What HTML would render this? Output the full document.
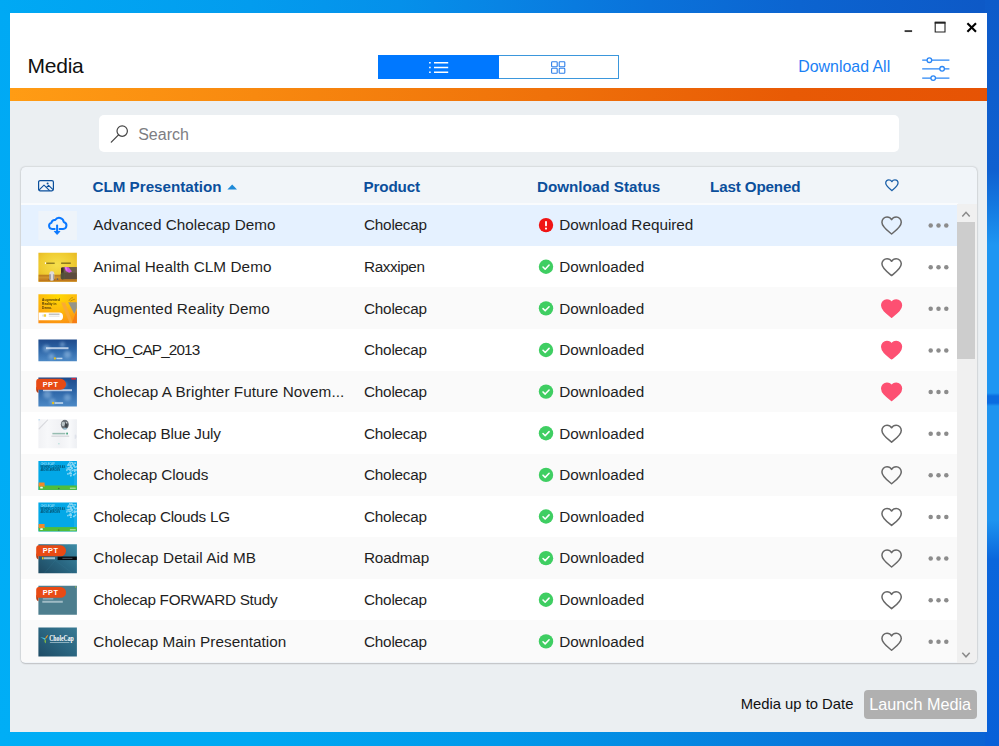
<!DOCTYPE html>
<html lang="en">
<head>
<meta charset="utf-8">
<title>Media</title>
<style>
html,body{margin:0;padding:0;}
body{width:999px;height:746px;overflow:hidden;position:relative;font-family:"Liberation Sans",sans-serif;color:#1b1b1b;
background:linear-gradient(180deg,#00a9f4,#00aef6);}
.abs{position:absolute;}
#tstrip{position:absolute;left:0;top:0;width:999px;height:14px;background:linear-gradient(90deg,#00a9f4 0%,#039cee 25%,#0590ea 40%,#0884e4 50%,#0a72da 65%,#0c64d0 80%,#0d58c6 100%);}
#bstrip{position:absolute;left:0;top:730px;width:999px;height:16px;background:linear-gradient(90deg,#00aef6 0%,#00a8f2 25%,#0198ea 50%,#048ae2 65%,#0878dc 80%,#0a62d4 100%);}
#rstrip{position:absolute;left:985px;top:0;width:14px;height:746px;background:linear-gradient(180deg,#0d5bc9 0px,#0f60d0 170px,#1478e0 205px,#1e96f2 245px,#1e96f2 393px,#0a6ce0 396px,#0a6ce0 403px,#1e94f0 406px,#1e94f0 520px,#0a66dc 560px,#0860d8 746px);}
#win{position:absolute;left:10px;top:13px;width:977px;height:719px;background:#ebeff2;overflow:hidden;}
#top{position:absolute;left:0;top:0;width:977px;height:76px;background:#fff;}
#bar{position:absolute;left:0;top:75px;width:977px;height:13px;background:linear-gradient(90deg,#ff9c14 0%,#f8890f 25%,#ef710a 55%,#e85a05 80%,#e65304 100%);}
#title{position:absolute;left:17.4px;top:39.8px;letter-spacing:-.2px;font-size:21px;line-height:26px;color:#111;}
#tog{position:absolute;left:368px;top:42px;width:241px;height:24px;box-sizing:border-box;border:1px solid #3b97dc;background:#fff;}
#tog .on{position:absolute;left:-1px;top:-1px;width:121px;height:24px;background:#0078ff;}
#tog svg{position:absolute;left:-1px;top:-1px;}
#dl{position:absolute;left:788.3px;top:44px;font-size:15.9px;line-height:20px;color:#1a80f5;}
#search{position:absolute;left:89px;top:102px;width:800px;height:37px;background:#fff;border-radius:5px;}
#search span{position:absolute;left:39.2px;top:9.8px;font-size:16px;line-height:20px;color:#7d7d82;}
#search svg{position:absolute;left:0;top:0;}
#card{position:absolute;left:11px;top:154px;width:955.6px;height:496px;background:#f1f5f9;border-radius:4.5px;overflow:hidden;box-shadow:0 0 2px rgba(0,0,0,.28),0 1px 1.5px rgba(0,0,0,.12);}
.hd{position:absolute;top:9.7px;font-size:15.2px;line-height:20px;font-weight:bold;color:#0b4f9c;white-space:nowrap;}
.row{position:absolute;left:0;width:936.4px;height:41.63px;}
.row.a{background:#fff;}
.row.b{background:#fafafa;}
.row.sel{background:#e5f1ff;}
.row span{position:absolute;top:11.2px;font-size:15.3px;line-height:20px;white-space:nowrap;color:#1f1f1f;}
.row .n{left:72.3px;}
.row .p{left:343px;}
.row .s{left:538.2px;}
.rg{position:absolute;left:0;top:0;overflow:visible;}
#sb{position:absolute;left:936.4px;top:37px;width:19.3px;height:459px;background:#f0f0f0;}
#sb .thumb{position:absolute;left:0;top:18px;width:17.4px;height:137px;background:#cdcdcd;}
#sb svg{position:absolute;left:0;}
#foot{position:absolute;left:730.7px;top:680.5px;font-size:14.8px;line-height:20px;color:#111;}
#btn{position:absolute;left:853.7px;top:676.6px;width:113px;height:29.2px;border-radius:4px;background:#b0b0b0;color:#fff;font-size:16.2px;line-height:29px;text-align:center;white-space:nowrap;}
#wc{position:absolute;left:880px;top:0;}
</style>
</head>
<body>
<div id="tstrip"></div><div id="bstrip"></div><div id="rstrip"></div>
<div id="win">
  <div id="top"></div>
  <div id="bar"></div>
  <div id="title">Media</div>
  <svg id="wc" width="97" height="76" viewBox="0 0 97 76">
    <path d="M14.600 18.100h7.500" stroke="#3a3a3a" stroke-width="1.900" fill="none"/>
    <path d="M45.2 9.8h9.8v9.2h-9.8z" stroke="#222" stroke-width="1.1" fill="none"/><path d="M44.7 9.6h10.8" stroke="#222" stroke-width="2" fill="none"/>
    <path d="M77.4 10.2l8.6 8.6M86 10.2l-8.6 8.6" stroke="#000" stroke-width="2.1" fill="none"/>
    <g stroke="#2a86f5" stroke-width="1.3" fill="#fff">
      <path d="M32.2 47.2h27.2M32.2 55.8h27.2M32.2 65.1h27.2"/>
      <circle cx="39.4" cy="47.2" r="2.3"/><circle cx="52.1" cy="55.8" r="2.3"/><circle cx="43.2" cy="65.1" r="2.3"/>
    </g>
  </svg>
  <div id="tog"><div class="on"></div>
    <svg width="241" height="24" viewBox="0 0 241 24">
      <g stroke="#fff" stroke-width="1.5" fill="none"><path d="M56 7.7h14.2M56 12.5h14.2M56 17.3h14.2"/><path d="M51.1 7.7h1.6M51.1 12.5h1.6M51.1 17.3h1.6"/></g>
      <g stroke="#2f80ea" stroke-width="1.1" fill="none"><rect x="173.6" y="6.7" width="5.6" height="5" rx=".8"/><rect x="181.2" y="6.7" width="5.6" height="5" rx=".8"/><rect x="173.6" y="13.3" width="5.6" height="5" rx=".8"/><rect x="181.2" y="13.3" width="5.6" height="5" rx=".8"/></g>
    </svg>
  </div>
  <div id="dl">Download All</div>
  <div id="search"><svg width="40" height="37" viewBox="0 0 40 37"><circle cx="23.2" cy="16.1" r="5.2" fill="none" stroke="#444" stroke-width="1.2"/><path d="M19.5 19.9l-7.2 7.2" stroke="#444" stroke-width="1.3" stroke-linecap="round"/></svg><span>Search</span></div>
  <div id="card">
    <svg class="abs" style="left:16px;top:12px" width="18" height="14" viewBox="0 0 18 14"><rect x="1.6" y="1.6" width="14.8" height="10.2" rx="1.5" fill="none" stroke="#0b4f9c" stroke-width="1.2"/><path d="M2.2 10.8l4.8-4.6 5.6 5.4M9.2 8.6l2.4-2.2 4.4 4.2" fill="none" stroke="#0b4f9c" stroke-width="1.1" stroke-linejoin="round"/><circle cx="10.6" cy="4.4" r="1" fill="#0b4f9c"/></svg>
    <div class="hd" style="left:71.5px">CLM Presentation</div>
    <svg class="abs" style="left:205px;top:15px" width="13" height="10" viewBox="0 0 13 10"><path d="M1.400 7.600L6.200 2.600l4.800 5z" fill="#1e8ad8"/></svg>
    <div class="hd" style="left:342.5px;letter-spacing:-.13px">Product</div>
    <div class="hd" style="left:516px">Download Status</div>
    <div class="hd" style="left:689px;letter-spacing:-.14px">Last Opened</div>
    <svg class="abs" style="left:862px;top:10px" width="18" height="16" viewBox="0 0 18 16"><g transform="translate(.6 .8) scale(.92)"><path d="M9 14C5.500 11.100 2.300 8.700 2.300 5.700 2.300 3.700 3.800 2.200 5.700 2.200c1.300 0 2.600.7 3.300 1.900.7-1.200 2-1.900 3.300-1.900 1.900 0 3.400 1.500 3.400 3.500 0 3-3.200 5.400-6.700 8.300z" fill="none" stroke="#1a5fa8" stroke-width="1.400" stroke-linejoin="round"/></g></svg>
<div class="abs" style="left:0;top:36px;width:937px;height:2px;background:#f9fbfd"></div>
<div class="row sel" style="top:38px;height:41px"><svg class="rg" width="936" height="43" viewBox="0 0 936 43"><g transform="translate(17.40 6.10)"><svg x="0" y="0" width="38.5" height="29" viewBox="0 0 38.5 29"><rect x="-1" y="-1" width="40.500" height="31" fill="#eef4fa"/><path d="M16.300 17.900H13.700a3.100 3.100 0 0 1-.7-6.100 3.500 3.500 0 0 1 3.800-2.800 4.600 4.600 0 0 1 8.500 1.900 3.550 3.550 0 0 1-.6 7H21.100" fill="none" stroke="#0a78ff" stroke-width="2" stroke-linecap="round" stroke-linejoin="round"/><path d="M18.700 14.300v6.500" stroke="#0a78ff" stroke-width="2" stroke-linecap="round"/><path d="M15.900 20.300h5.600l-2.800 3z" fill="#0a78ff" stroke="#0a78ff" stroke-width="1" stroke-linejoin="round"/></svg></g><g transform="translate(517.80 12.90) scale(1.0286)"><circle cx="7" cy="7" r="7" fill="#f01414"/><rect x="6.100" y="2.900" width="1.800" height="5.300" rx=".9" fill="#fff"/><circle cx="7" cy="10.400" r="1.050" fill="#fff"/></g><g transform="translate(859.60 10.60)"><path d="M11 18.300C6.400 14.500 1.700 11.200 1.700 6.800 1.700 3.900 3.900 1.700 6.600 1.700c1.800 0 3.500 1 4.400 2.600.9-1.600 2.600-2.600 4.400-2.600 2.700 0 4.900 2.200 4.900 5.100 0 4.400-4.700 7.700-9.300 11.500z" fill="none" stroke="#686868" stroke-width="1.450" stroke-linejoin="round" transform="translate(11 10) scale(1.04 1.02) translate(-11 -10.100)"/></g><g transform="translate(906.60 17.50)"><g fill="#8c8c8c"><circle cx="3.100" cy="3" r="2.250"/><circle cx="10.900" cy="3" r="2.250"/><circle cx="18.700" cy="3" r="2.250"/></g></g></svg><span class="n" style="top:10.40px;letter-spacing:0.009px;">Advanced Cholecap Demo</span><span class="p" style="top:10.40px;letter-spacing:-0.221px;">Cholecap</span><span class="s" style="top:10.40px;letter-spacing:-0.012px;">Download Required</span></div>
<div class="row a" style="top:79px;height:41px"><svg class="rg" width="936" height="43" viewBox="0 0 936 43"><g transform="translate(17.40 6.73)"><svg x="0" y="0" width="38.5" height="29" viewBox="0 0 38.5 29"><defs><radialGradient id="w1" cx=".48" cy=".42" r=".75"><stop offset="0" stop-color="#f6df4c"/><stop offset=".55" stop-color="#efcb30"/><stop offset="1" stop-color="#e2ad1b"/></radialGradient><linearGradient id="w1f" x1="0" y1="0" x2="0" y2="1"><stop offset="0" stop-color="#b9781a"/><stop offset=".4" stop-color="#d0932a"/><stop offset="1" stop-color="#b86c16"/></linearGradient><filter id="w1b"><feGaussianBlur stdDeviation=".45"/></filter><filter id="w1c"><feGaussianBlur stdDeviation=".25"/></filter></defs><rect x="-1" y="-1" width="40.500" height="31" fill="url(#w1)"/><rect y="22" width="38.500" height="7" fill="url(#w1f)"/><g filter="url(#w1b)"><rect x="22.700" y="14.500" width="16.500" height="12" rx="1.200" fill="#5c4c3e"/><rect x="24.500" y="14.500" width="14.500" height="5.500" fill="#6e5e4c"/><rect x="22.600" y="15" width="2.600" height="11.500" rx="1" fill="#3f3026"/><path d="M26 13.900l4.300.5 3.300 4.300-2.800 1.300-3.500-1.800z" fill="#cf52dc"/><path d="M26.300 14.200l2 .3.800 3.500-1.500-.6z" fill="#e27af0"/><rect x="22.200" y="19.800" width="4.800" height="6.800" rx="1.600" fill="#55553c" opacity=".85"/><ellipse cx="13.400" cy="26.800" rx="3.600" ry="1" fill="#8a5a14" opacity=".6"/><rect x="11" y="18.600" width="4.800" height="9.300" rx="2" fill="#dedada"/><rect x="11" y="21.500" width="1.300" height="5.500" fill="#8c8c92"/><rect x="14.600" y="21.500" width="1.200" height="5.500" fill="#a4a4aa"/><circle cx="19.100" cy="26.400" r=".8" fill="#5a6068"/></g><g filter="url(#w1c)"><rect x="6.500" y="9.600" width="1.200" height="1.700" fill="#fff"/><rect x="7.900" y="9.900" width="8.400" height="1.200" fill="#3a2c0c" opacity=".6"/><rect x="22.700" y="9.800" width="9.700" height="1.300" fill="#3a2c0c" opacity=".65"/></g></svg></g><g transform="translate(517.80 13.53) scale(1.0286)"><circle cx="7" cy="7" r="7" fill="#3fce62"/><path d="M4.100 7.300l2.100 2.100L10 5.400" fill="none" stroke="#fff" stroke-width="1.500" stroke-linecap="round" stroke-linejoin="round"/></g><g transform="translate(859.60 11.23)"><path d="M11 18.300C6.400 14.500 1.700 11.200 1.700 6.800 1.700 3.900 3.900 1.700 6.600 1.700c1.800 0 3.500 1 4.400 2.600.9-1.600 2.600-2.600 4.400-2.600 2.700 0 4.900 2.200 4.900 5.100 0 4.400-4.700 7.700-9.300 11.500z" fill="none" stroke="#686868" stroke-width="1.450" stroke-linejoin="round" transform="translate(11 10) scale(1.04 1.02) translate(-11 -10.100)"/></g><g transform="translate(906.60 18.13)"><g fill="#8c8c8c"><circle cx="3.100" cy="3" r="2.250"/><circle cx="10.900" cy="3" r="2.250"/><circle cx="18.700" cy="3" r="2.250"/></g></g></svg><span class="n" style="top:11.03px;letter-spacing:0.063px;">Animal Health CLM Demo</span><span class="p" style="top:11.03px;letter-spacing:-0.398px;">Raxxipen</span><span class="s" style="top:11.03px;">Downloaded</span></div>
<div class="row b" style="top:120px;height:42px"><svg class="rg" width="936" height="44" viewBox="0 0 936 44"><g transform="translate(17.40 7.36)"><svg x="0" y="0" width="38.5" height="29" viewBox="0 0 38.5 29"><defs><radialGradient id="w2" cx=".5" cy=".08" r=".95"><stop offset="0" stop-color="#ffd902"/><stop offset=".45" stop-color="#fdbd0c"/><stop offset="1" stop-color="#fb8f12"/></radialGradient><filter id="w2b"><feGaussianBlur stdDeviation=".3"/></filter></defs><rect x="-1" y="-1" width="40.500" height="31" fill="url(#w2)"/><g filter="url(#w2b)"><path d="M22.700 8.200h4.100l7.600 20.800h-3.100z" fill="#f9a836" opacity=".9"/><path d="M38.500 15.500l-5 13.500h5z" fill="#f47a14" opacity=".9"/><path d="M29.800 7.900h8.700v5.700l-2.600 6z" fill="#94948a"/><path d="M0 18.100h20.700a3.950 3.950 0 0 1 0 7.900H0z" fill="#fff"/><rect x="5.400" y="19.900" width="2.300" height="2.500" fill="#f0cf3a"/><rect x="4" y="20.200" width="1.400" height="2" fill="#d8d8d8"/><rect x="10.400" y="19.200" width="10.700" height="1.300" fill="#9a9a9a" opacity=".7"/><rect x="10.400" y="21.300" width="10.700" height="1" fill="#c8c8c8" opacity=".6"/></g><g font-family="Liberation Sans,sans-serif" font-weight="bold" font-size="4.100" fill="#3a2806" opacity=".9"><text x="3.700" y="7" textLength="17.800" lengthAdjust="spacingAndGlyphs">Augmented</text><text x="3.700" y="10.800" textLength="14.300" lengthAdjust="spacingAndGlyphs">Reality in</text><text x="3.700" y="14.500" textLength="9.700" lengthAdjust="spacingAndGlyphs">Demo.</text></g><path d="M30.500 6.500c1-1.500 1.500-2.500 3-3M32 6.800c1.500-1 3-1.500 4.500-2M33.500 3.200l1 .3" stroke="#4a3a10" stroke-width=".45" fill="none" opacity=".8"/></svg></g><g transform="translate(517.80 14.16) scale(1.0286)"><circle cx="7" cy="7" r="7" fill="#3fce62"/><path d="M4.100 7.300l2.100 2.100L10 5.400" fill="none" stroke="#fff" stroke-width="1.500" stroke-linecap="round" stroke-linejoin="round"/></g><g transform="translate(859.60 11.86)"><path d="M11 18.300C6.400 14.500 1.700 11.200 1.700 6.800 1.700 3.900 3.900 1.700 6.600 1.700c1.800 0 3.500 1 4.400 2.600.9-1.600 2.600-2.600 4.400-2.600 2.700 0 4.900 2.200 4.900 5.100 0 4.400-4.700 7.700-9.300 11.500z" fill="#fd5072" stroke="#fd5072" stroke-width="1.400" stroke-linejoin="round" transform="translate(11 10) scale(1.06 1.04) translate(-11 -10.300)"/></g><g transform="translate(906.60 18.76)"><g fill="#8c8c8c"><circle cx="3.100" cy="3" r="2.250"/><circle cx="10.900" cy="3" r="2.250"/><circle cx="18.700" cy="3" r="2.250"/></g></g></svg><span class="n" style="top:11.66px;letter-spacing:0.108px;">Augmented Reality Demo</span><span class="p" style="top:11.66px;letter-spacing:-0.221px;">Cholecap</span><span class="s" style="top:11.66px;">Downloaded</span></div>
<div class="row a" style="top:162px;height:42px"><svg class="rg" width="936" height="44" viewBox="0 0 936 44"><g transform="translate(17.40 6.99)"><svg x="0" y="3.4" width="38.5" height="21.8" viewBox="0 0 38.5 21.8"><defs><linearGradient id="w3" x1="0" y1="0" x2="0" y2="1"><stop offset="0" stop-color="#1e4888"/><stop offset=".45" stop-color="#2c64a6"/><stop offset="1" stop-color="#4f8cc8"/></linearGradient><filter id="w3b" x="-50%" y="-50%" width="200%" height="200%"><feGaussianBlur stdDeviation="1.600"/></filter></defs><rect x="-1" y="-1" width="40.500" height="23.800" fill="url(#w3)"/><g filter="url(#w3b)" fill="#9cc3e8" opacity=".55"><circle cx="8" cy="9" r="3.500"/><circle cx="13" cy="17" r="3"/><circle cx="29" cy="15" r="3.500"/><circle cx="24" cy="5" r="2.500"/></g><rect x="7.600" y="7.800" width="22.500" height="2" fill="#e4eefa" opacity=".75"/><rect x="15.500" y="18" width="2" height="2" fill="#e8c21a"/><rect x="18" y="18.300" width="6" height="1.500" fill="#d6e6f6" opacity=".85"/></svg></g><g transform="translate(517.80 13.79) scale(1.0286)"><circle cx="7" cy="7" r="7" fill="#3fce62"/><path d="M4.100 7.300l2.100 2.100L10 5.400" fill="none" stroke="#fff" stroke-width="1.500" stroke-linecap="round" stroke-linejoin="round"/></g><g transform="translate(859.60 11.49)"><path d="M11 18.300C6.400 14.500 1.700 11.200 1.700 6.800 1.700 3.900 3.900 1.700 6.600 1.700c1.800 0 3.500 1 4.400 2.600.9-1.600 2.600-2.600 4.400-2.600 2.700 0 4.900 2.200 4.900 5.100 0 4.400-4.700 7.700-9.300 11.500z" fill="#fd5072" stroke="#fd5072" stroke-width="1.400" stroke-linejoin="round" transform="translate(11 10) scale(1.06 1.04) translate(-11 -10.300)"/></g><g transform="translate(906.60 18.39)"><g fill="#8c8c8c"><circle cx="3.100" cy="3" r="2.250"/><circle cx="10.900" cy="3" r="2.250"/><circle cx="18.700" cy="3" r="2.250"/></g></g></svg><span class="n" style="top:11.29px;letter-spacing:-0.874px;">CHO_CAP_2013</span><span class="p" style="top:11.29px;letter-spacing:-0.221px;">Cholecap</span><span class="s" style="top:11.29px;">Downloaded</span></div>
<div class="row b" style="top:204px;height:41px"><svg class="rg" width="936" height="43" viewBox="0 0 936 43"><g transform="translate(17.40 6.62)"><svg x="0" y="0" width="38.5" height="29" viewBox="0 0 38.5 29"><defs><linearGradient id="w4" x1="0" y1="0" x2="0" y2="1"><stop offset="0" stop-color="#1e4888"/><stop offset=".45" stop-color="#2c64a6"/><stop offset="1" stop-color="#4f8cc8"/></linearGradient><filter id="w4b" x="-50%" y="-50%" width="200%" height="200%"><feGaussianBlur stdDeviation="1.600"/></filter></defs><rect x="-1" y="-1" width="40.500" height="31" fill="url(#w4)"/><g filter="url(#w4b)" fill="#9cc3e8" opacity=".5"><circle cx="9" cy="17" r="4"/><circle cx="14" cy="24" r="3"/><circle cx="29" cy="20" r="3.500"/><circle cx="26" cy="7" r="2.500"/></g><rect x="4.600" y="11.600" width="29" height="2" fill="#e4eefa" opacity=".75"/><rect x="13.700" y="24.300" width="2" height="2.200" fill="#e8c21a"/><rect x="16.200" y="24.600" width="8.500" height="1.600" fill="#d6e6f6" opacity=".85"/><rect x="33" y=".4" width="4.600" height="1.600" fill="#d8283a"/></svg><svg x="-2.3" y="0" width="32" height="16" viewBox="0 0 32 16"><path d="M0 9.300v2.600c0 1.700 1 3 2.300 3.500V10.300z" fill="#b83a0e"/><path d="M2.700 1.200H24.500a5.450 5.450 0 0 1 0 10.900H2.300C1 12.100 0 11.100 0 9.800V3.900C0 2.400 1.200 1.200 2.700 1.200z" fill="#e84a14"/><text x="6.700" y="9.100" font-family="Liberation Sans,sans-serif" font-weight="bold" font-size="7.300" letter-spacing=".45" fill="#fff">PPT</text></svg></g><g transform="translate(517.80 13.42) scale(1.0286)"><circle cx="7" cy="7" r="7" fill="#3fce62"/><path d="M4.100 7.300l2.100 2.100L10 5.400" fill="none" stroke="#fff" stroke-width="1.500" stroke-linecap="round" stroke-linejoin="round"/></g><g transform="translate(859.60 11.12)"><path d="M11 18.300C6.400 14.500 1.700 11.200 1.700 6.800 1.700 3.900 3.900 1.700 6.600 1.700c1.800 0 3.500 1 4.400 2.600.9-1.600 2.600-2.600 4.400-2.600 2.700 0 4.900 2.200 4.900 5.100 0 4.400-4.700 7.700-9.300 11.500z" fill="#fd5072" stroke="#fd5072" stroke-width="1.400" stroke-linejoin="round" transform="translate(11 10) scale(1.06 1.04) translate(-11 -10.300)"/></g><g transform="translate(906.60 18.02)"><g fill="#8c8c8c"><circle cx="3.100" cy="3" r="2.250"/><circle cx="10.900" cy="3" r="2.250"/><circle cx="18.700" cy="3" r="2.250"/></g></g></svg><span class="n" style="top:10.92px;letter-spacing:0.054px;">Cholecap A Brighter Future Novem...</span><span class="p" style="top:10.92px;letter-spacing:-0.221px;">Cholecap</span><span class="s" style="top:10.92px;">Downloaded</span></div>
<div class="row a" style="top:245px;height:42px"><svg class="rg" width="936" height="44" viewBox="0 0 936 44"><g transform="translate(17.40 7.25)"><svg x="0" y="0" width="38.5" height="29" viewBox="0 0 38.5 29"><defs><linearGradient id="w5" x1="0" y1="0" x2="1" y2="0"><stop offset="0" stop-color="#f0f1f4"/><stop offset=".25" stop-color="#f7f8fa"/><stop offset=".55" stop-color="#f1f2f5"/><stop offset=".8" stop-color="#f8f9fb"/><stop offset="1" stop-color="#eceef2"/></linearGradient><filter id="w5b"><feGaussianBlur stdDeviation=".45"/></filter></defs><rect x="-1" y="-1" width="40.500" height="31" fill="url(#w5)"/><g filter="url(#w5b)"><path d="M.2 10L9.600 .4" stroke="#d9dade" stroke-width="1.100" fill="none"/><path d="M36.300 15.500c1.200-.6 1.900.4 1.900 2 0 1.400-.9 2.400-1.900 2.100z" fill="#dfe2ea"/><ellipse cx="26.400" cy="5.300" rx="4" ry="4.800" fill="#6a7076"/><ellipse cx="25" cy="4.800" rx="1.800" ry="2.300" fill="#b9c3c6"/><ellipse cx="27.800" cy="6" rx="1.500" ry="2.500" fill="#3f444a"/><circle cx="28.200" cy="3.600" r=".7" fill="#fff"/><ellipse cx="26.600" cy="9.400" rx="2" ry=".9" fill="#8fb4c6"/><rect x="13" y="16.300" width="17.800" height="1.300" fill="#d6d8db"/><rect x="14" y="13.600" width="12.800" height="1.500" fill="#86b3a4" opacity=".85"/><rect x="27.800" y="13.400" width="1.800" height="1.800" fill="#4fa784"/><circle cx="20.500" cy="24.500" r=".6" fill="#7fd0c0"/></g><rect x="0" y="0" width="1.200" height="1" fill="#6ab6e6"/></svg></g><g transform="translate(517.80 14.05) scale(1.0286)"><circle cx="7" cy="7" r="7" fill="#3fce62"/><path d="M4.100 7.300l2.100 2.100L10 5.400" fill="none" stroke="#fff" stroke-width="1.500" stroke-linecap="round" stroke-linejoin="round"/></g><g transform="translate(859.60 11.75)"><path d="M11 18.300C6.400 14.500 1.700 11.200 1.700 6.800 1.700 3.900 3.900 1.700 6.600 1.700c1.800 0 3.500 1 4.400 2.600.9-1.600 2.600-2.600 4.400-2.600 2.700 0 4.900 2.200 4.900 5.100 0 4.400-4.700 7.700-9.300 11.500z" fill="none" stroke="#686868" stroke-width="1.450" stroke-linejoin="round" transform="translate(11 10) scale(1.04 1.02) translate(-11 -10.100)"/></g><g transform="translate(906.60 18.65)"><g fill="#8c8c8c"><circle cx="3.100" cy="3" r="2.250"/><circle cx="10.900" cy="3" r="2.250"/><circle cx="18.700" cy="3" r="2.250"/></g></g></svg><span class="n" style="top:11.55px;letter-spacing:-0.193px;">Cholecap Blue July</span><span class="p" style="top:11.55px;letter-spacing:-0.221px;">Cholecap</span><span class="s" style="top:11.55px;">Downloaded</span></div>
<div class="row b" style="top:287px;height:42px"><svg class="rg" width="936" height="44" viewBox="0 0 936 44"><g transform="translate(17.40 6.88)"><svg x="0" y="0" width="38.5" height="29" viewBox="0 0 38.5 29"><defs><filter id="w6b"><feGaussianBlur stdDeviation=".3"/></filter></defs><rect x="-1" y="-1" width="40.500" height="31" fill="#03a8e7"/><rect y="24.600" width="38.500" height="4.400" fill="#4fbd3a"/><path d="M0 21.500h6.200v3.200l.6.800H0z" fill="#f08a28"/><g filter="url(#w6b)"><g fill="#e4f6fd" opacity=".6"><circle cx="30.0" cy="3.7" r="0.82"/><circle cx="38.3" cy="5.8" r="0.87"/><circle cx="37.5" cy="8.9" r="0.88"/><circle cx="30.3" cy="2.5" r="0.55"/><circle cx="30.8" cy="8.7" r="0.72"/><circle cx="33.0" cy="7.6" r="0.59"/><circle cx="32.6" cy="14.8" r="0.81"/><circle cx="36.4" cy="13.4" r="0.56"/><circle cx="32.1" cy="6.3" r="0.50"/><circle cx="35.4" cy="5.6" r="0.59"/><circle cx="32.2" cy="14.8" r="0.72"/><circle cx="32.5" cy="5.1" r="0.88"/><circle cx="31.5" cy="1.4" r="0.86"/><circle cx="32.5" cy="12.1" r="0.57"/><circle cx="34.5" cy="9.5" r="0.62"/><circle cx="33.3" cy="7.7" r="0.77"/><circle cx="31.9" cy="11.4" r="0.83"/><circle cx="30.4" cy="8.5" r="0.69"/><circle cx="33.2" cy="6.4" r="0.89"/><circle cx="34.0" cy="7.2" r="0.82"/><circle cx="30.7" cy="12.1" r="0.50"/><circle cx="36.0" cy="8.9" r="0.88"/><circle cx="35.3" cy="13.9" r="0.87"/><circle cx="36.8" cy="6.5" r="0.64"/><circle cx="28.6" cy="7.0" r="0.54"/><circle cx="33.5" cy="1.6" r="0.84"/><circle cx="36.4" cy="10.3" r="0.74"/><circle cx="36.5" cy="5.9" r="0.87"/><circle cx="30.5" cy="6.9" r="0.63"/><circle cx="34.3" cy="9.8" r="0.56"/><circle cx="31.4" cy="1.3" r="0.56"/><circle cx="30.0" cy="7.0" r="0.59"/><circle cx="29.2" cy="4.4" r="0.68"/><circle cx="32.4" cy="8.8" r="0.87"/><circle cx="37.6" cy="9.0" r="0.84"/><circle cx="37.0" cy="12.5" r="0.88"/><circle cx="30.1" cy="3.3" r="0.54"/><circle cx="31.5" cy="9.1" r="0.84"/><circle cx="32.5" cy="12.7" r="0.90"/><circle cx="37.0" cy="2.3" r="0.68"/><circle cx="28.7" cy="8.5" r="0.69"/><circle cx="32.7" cy="12.4" r="0.56"/><circle cx="29.5" cy="13.0" r="0.88"/><circle cx="30.7" cy="4.4" r="0.64"/><circle cx="36.2" cy="10.0" r="0.81"/><circle cx="35.9" cy="4.8" r="0.81"/><circle cx="34.4" cy="2.1" r="0.77"/><circle cx="33.8" cy="3.7" r="0.78"/><circle cx="32.8" cy="12.9" r="0.81"/><circle cx="32.5" cy="4.4" r="0.88"/><circle cx="31.0" cy="3.6" r="0.50"/><circle cx="30.8" cy="7.0" r="0.77"/><circle cx="28.5" cy="9.5" r="0.76"/><circle cx="34.6" cy="3.9" r="0.76"/><circle cx="33.2" cy="1.5" r="0.64"/><circle cx="36.6" cy="2.4" r="0.78"/><circle cx="29.4" cy="7.4" r="0.57"/><circle cx="36.5" cy="2.0" r="0.69"/><circle cx="31.8" cy="2.3" r="0.79"/><circle cx="36.0" cy="13.6" r="0.73"/><circle cx="31.7" cy="4.0" r="0.75"/><circle cx="34.3" cy="2.3" r="0.79"/><circle cx="35.9" cy="8.5" r="0.68"/><circle cx="32.0" cy="5.3" r="0.77"/><circle cx="32.8" cy="6.9" r="0.69"/><circle cx="33.8" cy="9.7" r="0.55"/><circle cx="32.6" cy="10.8" r="0.58"/><circle cx="37.5" cy="9.1" r="0.65"/><circle cx="30.2" cy="4.4" r="0.60"/><circle cx="33.7" cy="7.9" r="0.66"/><circle cx="32.9" cy="12.5" r="0.55"/><circle cx="35.3" cy="4.2" r="0.51"/><circle cx="32.2" cy="6.5" r="0.72"/><circle cx="31.2" cy="12.6" r="0.88"/><circle cx="35.2" cy="3.8" r="0.83"/></g><path d="M36.600 14v10.500" stroke="#bfeafa" stroke-width=".35" opacity=".7"/><rect x="1.800" y="25.800" width="2.600" height="1.700" rx=".5" fill="#f2fbef"/><circle cx="20.400" cy="27.600" r=".7" fill="#3a5a4a"/><rect x="31.500" y="26.800" width="5.800" height="1" fill="#d8f3d2" opacity=".85"/></g><g font-family="Liberation Sans,sans-serif"><text x="2.300" y="4.300" font-size="3.300" fill="#d9f2fc" opacity=".75" textLength="14" lengthAdjust="spacingAndGlyphs">CHOLECAP</text><g font-weight="bold" font-size="2.800" fill="#04202e" opacity=".68"><text x="2" y="7.400" textLength="24.600" lengthAdjust="spacingAndGlyphs">WISHING CLOUDS AS</text><text x="2" y="10" textLength="19.800" lengthAdjust="spacingAndGlyphs">ABOVE ARROWS</text></g></g></svg></g><g transform="translate(517.80 13.68) scale(1.0286)"><circle cx="7" cy="7" r="7" fill="#3fce62"/><path d="M4.100 7.300l2.100 2.100L10 5.400" fill="none" stroke="#fff" stroke-width="1.500" stroke-linecap="round" stroke-linejoin="round"/></g><g transform="translate(859.60 11.38)"><path d="M11 18.300C6.400 14.500 1.700 11.200 1.700 6.800 1.700 3.900 3.900 1.700 6.600 1.700c1.800 0 3.500 1 4.400 2.600.9-1.600 2.600-2.600 4.400-2.600 2.700 0 4.900 2.200 4.900 5.100 0 4.400-4.700 7.700-9.300 11.500z" fill="none" stroke="#686868" stroke-width="1.450" stroke-linejoin="round" transform="translate(11 10) scale(1.04 1.02) translate(-11 -10.100)"/></g><g transform="translate(906.60 18.28)"><g fill="#8c8c8c"><circle cx="3.100" cy="3" r="2.250"/><circle cx="10.900" cy="3" r="2.250"/><circle cx="18.700" cy="3" r="2.250"/></g></g></svg><span class="n" style="top:11.18px;letter-spacing:-0.102px;">Cholecap Clouds</span><span class="p" style="top:11.18px;letter-spacing:-0.221px;">Cholecap</span><span class="s" style="top:11.18px;">Downloaded</span></div>
<div class="row a" style="top:329px;height:41px"><svg class="rg" width="936" height="43" viewBox="0 0 936 43"><g transform="translate(17.40 6.51)"><svg x="0" y="0" width="38.5" height="29" viewBox="0 0 38.5 29"><defs><filter id="w6c"><feGaussianBlur stdDeviation=".3"/></filter></defs><rect x="-1" y="-1" width="40.500" height="31" fill="#03a8e7"/><rect y="24.600" width="38.500" height="4.400" fill="#4fbd3a"/><path d="M0 21.500h6.200v3.200l.6.800H0z" fill="#f08a28"/><g filter="url(#w6c)"><g fill="#e4f6fd" opacity=".6"><circle cx="30.0" cy="3.7" r="0.82"/><circle cx="38.3" cy="5.8" r="0.87"/><circle cx="37.5" cy="8.9" r="0.88"/><circle cx="30.3" cy="2.5" r="0.55"/><circle cx="30.8" cy="8.7" r="0.72"/><circle cx="33.0" cy="7.6" r="0.59"/><circle cx="32.6" cy="14.8" r="0.81"/><circle cx="36.4" cy="13.4" r="0.56"/><circle cx="32.1" cy="6.3" r="0.50"/><circle cx="35.4" cy="5.6" r="0.59"/><circle cx="32.2" cy="14.8" r="0.72"/><circle cx="32.5" cy="5.1" r="0.88"/><circle cx="31.5" cy="1.4" r="0.86"/><circle cx="32.5" cy="12.1" r="0.57"/><circle cx="34.5" cy="9.5" r="0.62"/><circle cx="33.3" cy="7.7" r="0.77"/><circle cx="31.9" cy="11.4" r="0.83"/><circle cx="30.4" cy="8.5" r="0.69"/><circle cx="33.2" cy="6.4" r="0.89"/><circle cx="34.0" cy="7.2" r="0.82"/><circle cx="30.7" cy="12.1" r="0.50"/><circle cx="36.0" cy="8.9" r="0.88"/><circle cx="35.3" cy="13.9" r="0.87"/><circle cx="36.8" cy="6.5" r="0.64"/><circle cx="28.6" cy="7.0" r="0.54"/><circle cx="33.5" cy="1.6" r="0.84"/><circle cx="36.4" cy="10.3" r="0.74"/><circle cx="36.5" cy="5.9" r="0.87"/><circle cx="30.5" cy="6.9" r="0.63"/><circle cx="34.3" cy="9.8" r="0.56"/><circle cx="31.4" cy="1.3" r="0.56"/><circle cx="30.0" cy="7.0" r="0.59"/><circle cx="29.2" cy="4.4" r="0.68"/><circle cx="32.4" cy="8.8" r="0.87"/><circle cx="37.6" cy="9.0" r="0.84"/><circle cx="37.0" cy="12.5" r="0.88"/><circle cx="30.1" cy="3.3" r="0.54"/><circle cx="31.5" cy="9.1" r="0.84"/><circle cx="32.5" cy="12.7" r="0.90"/><circle cx="37.0" cy="2.3" r="0.68"/><circle cx="28.7" cy="8.5" r="0.69"/><circle cx="32.7" cy="12.4" r="0.56"/><circle cx="29.5" cy="13.0" r="0.88"/><circle cx="30.7" cy="4.4" r="0.64"/><circle cx="36.2" cy="10.0" r="0.81"/><circle cx="35.9" cy="4.8" r="0.81"/><circle cx="34.4" cy="2.1" r="0.77"/><circle cx="33.8" cy="3.7" r="0.78"/><circle cx="32.8" cy="12.9" r="0.81"/><circle cx="32.5" cy="4.4" r="0.88"/><circle cx="31.0" cy="3.6" r="0.50"/><circle cx="30.8" cy="7.0" r="0.77"/><circle cx="28.5" cy="9.5" r="0.76"/><circle cx="34.6" cy="3.9" r="0.76"/><circle cx="33.2" cy="1.5" r="0.64"/><circle cx="36.6" cy="2.4" r="0.78"/><circle cx="29.4" cy="7.4" r="0.57"/><circle cx="36.5" cy="2.0" r="0.69"/><circle cx="31.8" cy="2.3" r="0.79"/><circle cx="36.0" cy="13.6" r="0.73"/><circle cx="31.7" cy="4.0" r="0.75"/><circle cx="34.3" cy="2.3" r="0.79"/><circle cx="35.9" cy="8.5" r="0.68"/><circle cx="32.0" cy="5.3" r="0.77"/><circle cx="32.8" cy="6.9" r="0.69"/><circle cx="33.8" cy="9.7" r="0.55"/><circle cx="32.6" cy="10.8" r="0.58"/><circle cx="37.5" cy="9.1" r="0.65"/><circle cx="30.2" cy="4.4" r="0.60"/><circle cx="33.7" cy="7.9" r="0.66"/><circle cx="32.9" cy="12.5" r="0.55"/><circle cx="35.3" cy="4.2" r="0.51"/><circle cx="32.2" cy="6.5" r="0.72"/><circle cx="31.2" cy="12.6" r="0.88"/><circle cx="35.2" cy="3.8" r="0.83"/></g><path d="M36.600 14v10.500" stroke="#bfeafa" stroke-width=".35" opacity=".7"/><rect x="1.800" y="25.800" width="2.600" height="1.700" rx=".5" fill="#f2fbef"/><circle cx="20.400" cy="27.600" r=".7" fill="#3a5a4a"/><rect x="31.500" y="26.800" width="5.800" height="1" fill="#d8f3d2" opacity=".85"/></g><g font-family="Liberation Sans,sans-serif"><text x="2.300" y="4.300" font-size="3.300" fill="#d9f2fc" opacity=".75" textLength="14" lengthAdjust="spacingAndGlyphs">CHOLECAP</text><g font-weight="bold" font-size="2.800" fill="#04202e" opacity=".68"><text x="2" y="7.400" textLength="24.600" lengthAdjust="spacingAndGlyphs">WISHING CLOUDS AS</text><text x="2" y="10" textLength="19.800" lengthAdjust="spacingAndGlyphs">ABOVE ARROWS</text></g></g></svg></g><g transform="translate(517.80 13.31) scale(1.0286)"><circle cx="7" cy="7" r="7" fill="#3fce62"/><path d="M4.100 7.300l2.100 2.100L10 5.400" fill="none" stroke="#fff" stroke-width="1.500" stroke-linecap="round" stroke-linejoin="round"/></g><g transform="translate(859.60 11.01)"><path d="M11 18.300C6.400 14.500 1.700 11.200 1.700 6.800 1.700 3.900 3.900 1.700 6.600 1.700c1.800 0 3.500 1 4.400 2.600.9-1.600 2.600-2.600 4.400-2.600 2.700 0 4.900 2.200 4.900 5.100 0 4.400-4.700 7.700-9.300 11.500z" fill="none" stroke="#686868" stroke-width="1.450" stroke-linejoin="round" transform="translate(11 10) scale(1.04 1.02) translate(-11 -10.100)"/></g><g transform="translate(906.60 17.91)"><g fill="#8c8c8c"><circle cx="3.100" cy="3" r="2.250"/><circle cx="10.900" cy="3" r="2.250"/><circle cx="18.700" cy="3" r="2.250"/></g></g></svg><span class="n" style="top:10.81px;letter-spacing:-0.252px;">Cholecap Clouds LG</span><span class="p" style="top:10.81px;letter-spacing:-0.221px;">Cholecap</span><span class="s" style="top:10.81px;">Downloaded</span></div>
<div class="row b" style="top:370px;height:42px"><svg class="rg" width="936" height="44" viewBox="0 0 936 44"><g transform="translate(17.40 7.14)"><svg x="0" y="0" width="38.5" height="29" viewBox="0 0 38.5 29"><defs><linearGradient id="w7" x1="1" y1="0" x2="0" y2="1"><stop offset="0" stop-color="#3f8ea8"/><stop offset=".5" stop-color="#2a6883"/><stop offset="1" stop-color="#1d475e"/></linearGradient></defs><rect x="-1" y="-1" width="40.500" height="31" fill="url(#w7)"/><path d="M6 29L31 0M14 14l20 15" stroke="#3a7f98" stroke-width=".4" opacity=".6"/><rect x="19.200" y="12.400" width="19.300" height="3.500" fill="#060a0e"/><rect x="3.600" y="13" width="1.600" height="2.200" fill="#e8c21a"/><rect x="5.600" y="13.100" width="11" height="2" fill="#b4cfda" opacity=".85"/><rect x="24" y="13.700" width="10" height="1" fill="#4a5560"/></svg><svg x="-2.3" y="0" width="32" height="16" viewBox="0 0 32 16"><path d="M0 9.300v2.600c0 1.700 1 3 2.300 3.500V10.300z" fill="#b83a0e"/><path d="M2.700 1.200H24.500a5.450 5.450 0 0 1 0 10.900H2.300C1 12.100 0 11.100 0 9.800V3.900C0 2.400 1.200 1.200 2.700 1.200z" fill="#e84a14"/><text x="6.700" y="9.100" font-family="Liberation Sans,sans-serif" font-weight="bold" font-size="7.300" letter-spacing=".45" fill="#fff">PPT</text></svg></g><g transform="translate(517.80 13.94) scale(1.0286)"><circle cx="7" cy="7" r="7" fill="#3fce62"/><path d="M4.100 7.300l2.100 2.100L10 5.400" fill="none" stroke="#fff" stroke-width="1.500" stroke-linecap="round" stroke-linejoin="round"/></g><g transform="translate(859.60 11.64)"><path d="M11 18.300C6.400 14.500 1.700 11.200 1.700 6.800 1.700 3.900 3.900 1.700 6.600 1.700c1.800 0 3.500 1 4.400 2.600.9-1.600 2.600-2.600 4.400-2.600 2.700 0 4.900 2.200 4.900 5.100 0 4.400-4.700 7.700-9.300 11.500z" fill="none" stroke="#686868" stroke-width="1.450" stroke-linejoin="round" transform="translate(11 10) scale(1.04 1.02) translate(-11 -10.100)"/></g><g transform="translate(906.60 18.54)"><g fill="#8c8c8c"><circle cx="3.100" cy="3" r="2.250"/><circle cx="10.900" cy="3" r="2.250"/><circle cx="18.700" cy="3" r="2.250"/></g></g></svg><span class="n" style="top:11.44px;letter-spacing:0.093px;">Cholecap Detail Aid MB</span><span class="p" style="top:11.44px;letter-spacing:-0.190px;">Roadmap</span><span class="s" style="top:11.44px;">Downloaded</span></div>
<div class="row a" style="top:412px;height:41px"><svg class="rg" width="936" height="43" viewBox="0 0 936 43"><g transform="translate(17.40 6.77)"><svg x="0" y="0" width="38.5" height="29" viewBox="0 0 38.5 29"><rect x="-1" y="-1" width="40.500" height="31" fill="#4d7e8e"/><rect x="4.400" y="12.300" width="10.500" height="1.500" fill="#a8c2cc" opacity=".7"/><rect x="3.900" y="15" width="20.500" height="2" fill="#b4cad3" opacity=".8"/><rect x="36.700" y=".6" width="1" height="1.200" fill="#a8c83a"/></svg><svg x="-2.3" y="0" width="32" height="16" viewBox="0 0 32 16"><path d="M0 9.300v2.600c0 1.700 1 3 2.300 3.500V10.300z" fill="#b83a0e"/><path d="M2.700 1.200H24.500a5.450 5.450 0 0 1 0 10.900H2.300C1 12.100 0 11.100 0 9.800V3.900C0 2.400 1.200 1.200 2.700 1.200z" fill="#e84a14"/><text x="6.700" y="9.100" font-family="Liberation Sans,sans-serif" font-weight="bold" font-size="7.300" letter-spacing=".45" fill="#fff">PPT</text></svg></g><g transform="translate(517.80 13.57) scale(1.0286)"><circle cx="7" cy="7" r="7" fill="#3fce62"/><path d="M4.100 7.300l2.100 2.100L10 5.400" fill="none" stroke="#fff" stroke-width="1.500" stroke-linecap="round" stroke-linejoin="round"/></g><g transform="translate(859.60 11.27)"><path d="M11 18.300C6.400 14.500 1.700 11.200 1.700 6.800 1.700 3.900 3.900 1.700 6.600 1.700c1.800 0 3.500 1 4.400 2.600.9-1.600 2.600-2.600 4.400-2.600 2.700 0 4.900 2.200 4.900 5.100 0 4.400-4.700 7.700-9.300 11.500z" fill="none" stroke="#686868" stroke-width="1.450" stroke-linejoin="round" transform="translate(11 10) scale(1.04 1.02) translate(-11 -10.100)"/></g><g transform="translate(906.60 18.17)"><g fill="#8c8c8c"><circle cx="3.100" cy="3" r="2.250"/><circle cx="10.900" cy="3" r="2.250"/><circle cx="18.700" cy="3" r="2.250"/></g></g></svg><span class="n" style="top:11.07px;letter-spacing:-0.289px;">Cholecap FORWARD Study</span><span class="p" style="top:11.07px;letter-spacing:-0.221px;">Cholecap</span><span class="s" style="top:11.07px;">Downloaded</span></div>
<div class="row b" style="top:453px;height:42px"><svg class="rg" width="936" height="44" viewBox="0 0 936 44"><g transform="translate(17.40 7.40)"><svg x="0" y="0" width="38.5" height="29" viewBox="0 0 38.5 29"><defs><linearGradient id="w9" x1="1" y1="0" x2="0" y2="1"><stop offset="0" stop-color="#3a7b94"/><stop offset=".5" stop-color="#2a6580"/><stop offset="1" stop-color="#1e4a64"/></linearGradient></defs><rect x="-1" y="-1" width="40.500" height="31" fill="url(#w9)"/><path d="M1.800 9.600l5.400 1.200-.6 1.800z" fill="#45c0e0"/><path d="M6.800 11.600c.3-2 1.300-3.300 3-4.200-.5 2-1.300 3.300-3 4.200z" fill="#f39a1e"/><path d="M6.600 11.600c1 1.300 1.200 2.800.4 4.600-1-1.500-1.200-3-.4-4.600z" fill="#8ec63f"/><text x="10.800" y="13.300" font-family="Liberation Serif,serif" font-weight="bold" font-size="7.300" fill="#fff" textLength="24.600" lengthAdjust="spacingAndGlyphs">CholeCap</text><rect x="11.500" y="14.600" width="19.500" height=".9" fill="#c6dbe4" opacity=".7"/></svg></g><g transform="translate(517.80 14.20) scale(1.0286)"><circle cx="7" cy="7" r="7" fill="#3fce62"/><path d="M4.100 7.300l2.100 2.100L10 5.400" fill="none" stroke="#fff" stroke-width="1.500" stroke-linecap="round" stroke-linejoin="round"/></g><g transform="translate(859.60 11.90)"><path d="M11 18.300C6.400 14.500 1.700 11.200 1.700 6.800 1.700 3.900 3.900 1.700 6.600 1.700c1.800 0 3.500 1 4.400 2.600.9-1.600 2.600-2.600 4.400-2.600 2.700 0 4.900 2.200 4.900 5.100 0 4.400-4.700 7.700-9.300 11.500z" fill="none" stroke="#686868" stroke-width="1.450" stroke-linejoin="round" transform="translate(11 10) scale(1.04 1.02) translate(-11 -10.100)"/></g><g transform="translate(906.60 18.80)"><g fill="#8c8c8c"><circle cx="3.100" cy="3" r="2.250"/><circle cx="10.900" cy="3" r="2.250"/><circle cx="18.700" cy="3" r="2.250"/></g></g></svg><span class="n" style="top:11.70px;letter-spacing:0.035px;">Cholecap Main Presentation</span><span class="p" style="top:11.70px;letter-spacing:-0.221px;">Cholecap</span><span class="s" style="top:11.70px;">Downloaded</span></div>
    <div id="sb"><div class="thumb"></div>
      <svg style="top:0" width="19" height="18" viewBox="0 0 19 18"><path d="M5.300 12.600l3.700-4.300 3.700 4.300" fill="none" stroke="#8a8a8a" stroke-width="1.500"/></svg>
      <svg style="top:441px" width="19" height="18" viewBox="0 0 19 18"><path d="M5.300 7.700l3.700 4.100 3.700-4.100" fill="none" stroke="#8a8a8a" stroke-width="1.500"/></svg>
    </div>
  </div>
  <div id="foot">Media up to Date</div>
  <div id="btn">Launch Media</div>
</div>
</body>
</html>
